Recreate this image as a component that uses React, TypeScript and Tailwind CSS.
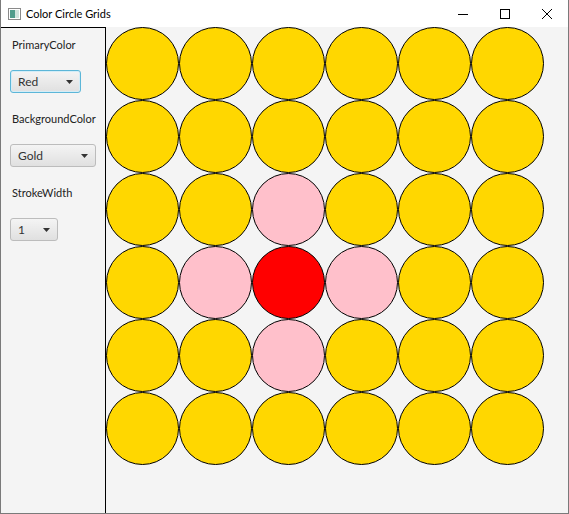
import React from 'react';

const GOLD = '#ffd700';
const PINK = '#ffc0cb';
const RED = '#ff0000';

// which cell gets which fill: red in the middle, pink around it
const cellColor = (row: number, col: number): string => {
    if (row === 3 && col === 2) return RED;
    if (Math.abs(row - 3) + Math.abs(col - 2) === 1) return PINK;
    return GOLD;
};

const Arrow: React.FC = () => (
    <svg width="7" height="4" viewBox="0 0 7 4" className="shrink-0">
        <path d="M0 0 H7 L3.5 4 Z" fill="#333333" />
    </svg>
);

const Combo: React.FC<{ value: string; width: string; focused?: boolean }> = ({ value, width, focused }) => (
    <div
        className={`${width} h-[23px] rounded-[3px] border flex items-center justify-between pl-[7px] pr-[7px] text-[12px] text-[#333333] bg-gradient-to-b from-[#f4f4f4] to-[#e0e0e0] ${
            focused ? 'border-[#5cb6d8] shadow-[inset_0_0_0_1px_#d4edf7]' : 'border-[#bcbcbc]'
        }`}
    >
        <span className="leading-none">{value}</span>
        <Arrow />
    </div>
);

const App: React.FC = () => {
    const rows = [0, 1, 2, 3, 4, 5];
    const cols = [0, 1, 2, 3, 4, 5];

    return (
        <div className="w-[569px] h-[514px] flex flex-col bg-[#f4f4f4] border-l border-r border-b border-[#7a7a7a] font-['Lato','Noto_Sans',sans-serif] text-[#222222] overflow-hidden">
            {/* title bar */}
            <div className="h-[27px] bg-white flex items-center shrink-0">
                <svg width="13" height="12" viewBox="0 0 13 12" className="ml-[7px]">
                    <rect x="0.5" y="0.5" width="12" height="11" fill="#ffffff" stroke="#8a8a8a" />
                    <rect x="2" y="2" width="5" height="8" fill="#4f9c8c" />
                    <rect x="7" y="2" width="4" height="8" fill="#cfe3dd" />
                </svg>
                <span className="ml-[5px] text-[11px] leading-none text-black">Color Circle Grids</span>
                <div className="ml-auto flex items-center h-full">
                    <div className="w-[42px] h-full flex items-center justify-center">
                        <svg width="10" height="10" viewBox="0 0 10 10">
                            <path d="M0 5.5 H10" stroke="#000" strokeWidth="1" />
                        </svg>
                    </div>
                    <div className="w-[42px] h-full flex items-center justify-center">
                        <svg width="10" height="10" viewBox="0 0 10 10">
                            <rect x="0.5" y="0.5" width="9" height="9" fill="none" stroke="#000" strokeWidth="1" />
                        </svg>
                    </div>
                    <div className="w-[42px] h-full flex items-center justify-center">
                        <svg width="10" height="10" viewBox="0 0 10 10">
                            <path d="M0 0 L10 10 M10 0 L0 10" stroke="#000" strokeWidth="1" />
                        </svg>
                    </div>
                </div>
            </div>

            <div className="flex flex-1 min-h-0">
                {/* controls */}
                <div className="w-[105px] shrink-0 border-t border-r border-black flex flex-col items-start pl-[9px] pt-[9px] text-[11px]">
                    <div className="h-4 leading-4 pl-[2px]">PrimaryColor</div>
                    <div className="mt-[17px]">
                        <Combo value="Red" width="w-[71px]" focused />
                    </div>
                    <div className="mt-[18px] h-4 leading-4 pl-[2px]">BackgroundColor</div>
                    <div className="mt-[17px]">
                        <Combo value="Gold" width="w-[86px]" />
                    </div>
                    <div className="mt-[18px] h-4 leading-4 pl-[2px]">StrokeWidth</div>
                    <div className="mt-[17px]">
                        <Combo value="1" width="w-[48px]" />
                    </div>
                </div>

                {/* circles */}
                <div className="grid grid-cols-[repeat(6,73px)] auto-rows-[73px] content-start">
                    {rows.map(r =>
                        cols.map(c => (
                            <div
                                key={`${r}-${c}`}
                                className="w-[73px] h-[73px] rounded-full border border-black"
                                style={{ backgroundColor: cellColor(r, c) }}
                            />
                        ))
                    )}
                </div>
            </div>
        </div>
    );
};

export default App;
